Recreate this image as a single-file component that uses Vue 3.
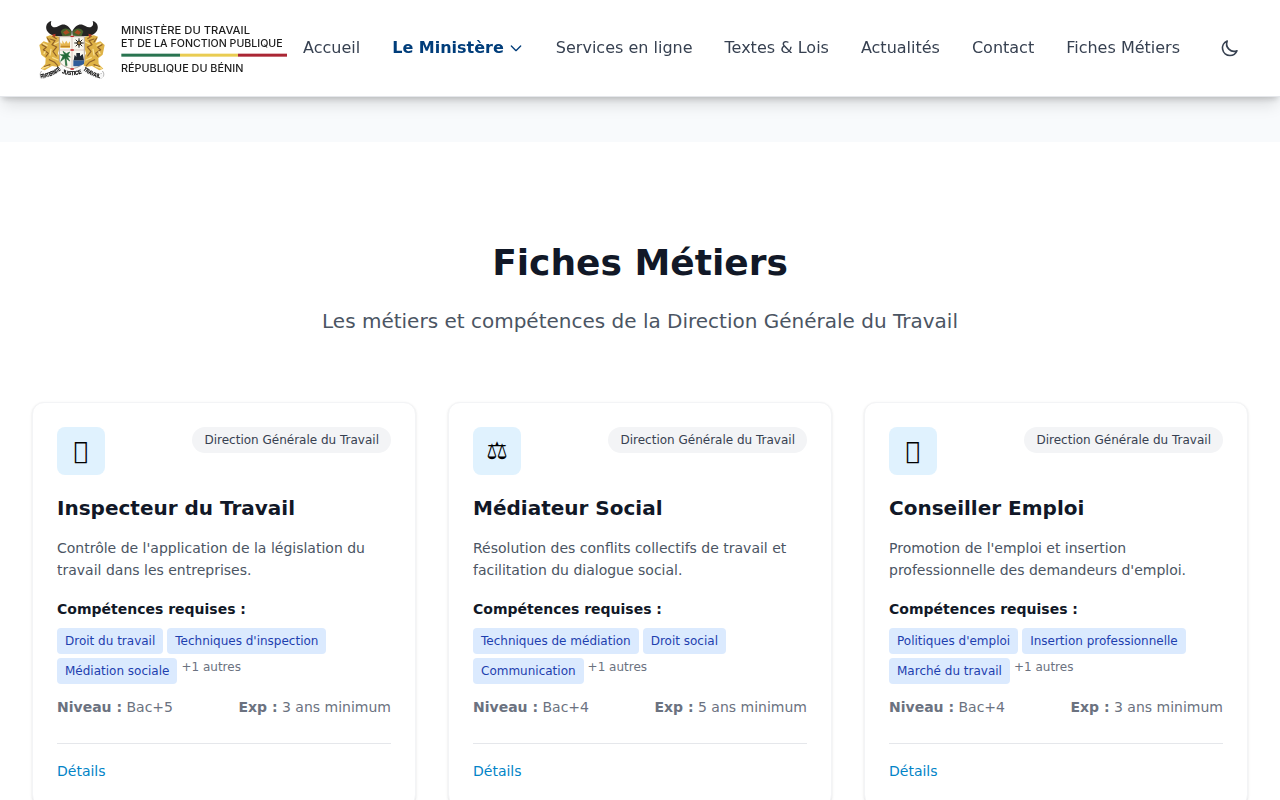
<script setup>
const links = [
  { label: 'Accueil' },
  { label: 'Le Ministère', active: true, menu: true },
  { label: 'Services en ligne' },
  { label: 'Textes & Lois' },
  { label: 'Actualités' },
  { label: 'Contact' },
  { label: 'Fiches Métiers' },
]

const jobs = [
  {
    icon: '\uE000',
    title: 'Inspecteur du Travail',
    text: "Contrôle de l'application de la législation du travail dans les entreprises.",
    skills: ['Droit du travail', "Techniques d'inspection", 'Médiation sociale'],
    level: 'Bac+5',
    exp: '3 ans minimum',
  },
  {
    icon: '⚖',
    title: 'Médiateur Social',
    text: 'Résolution des conflits collectifs de travail et facilitation du dialogue social.',
    skills: ['Techniques de médiation', 'Droit social', 'Communication'],
    level: 'Bac+4',
    exp: '5 ans minimum',
  },
  {
    icon: '\uE000',
    title: 'Conseiller Emploi',
    text: "Promotion de l'emploi et insertion professionnelle des demandeurs d'emploi.",
    skills: ["Politiques d'emploi", 'Insertion professionnelle', 'Marché du travail'],
    level: 'Bac+4',
    exp: '3 ans minimum',
  },
]
</script>

<template>
  <div class="page">
    <header class="header">
      <svg class="logo" viewBox="6 18 765 192">
        <defs>
          <g id="half">
            <path d="M64 33C50 36 45 51 51 62C59 76 78 80 96 78L124 74L125 64C116 44 100 38 86 48C73 57 58 50 64 33Z" fill="#242323" />
            <path d="M92 65C98 53 115 53 124 64L124 77L98 79Z" fill="#49622c" />
            <path d="M99 67L110 59L119 68L106 74Z" fill="#a94b20" />
            <path d="M60 76L76 77L90 82L91 105L84 130L93 151L90 172L66 168L44 181L32 176L46 162L47 145L34 134L28 105L41 94L56 99L48 80Z" fill="#dfb347" />
            <path d="M36 104L49 112L40 119L55 130L48 139M60 87L75 92L66 104L80 111L69 124L79 138M58 149L74 157L83 167M68 79L79 86M44 170L60 164M52 84L60 96" fill="none" stroke="#8f6128" stroke-width="3.5" />
            <path d="M40 101L51 107M63 118L60 135M74 102L86 96M68 143L84 150M38 175L55 169M45 125L42 131" fill="none" stroke="#f8df92" stroke-width="4" />
            <path d="M66 74L77 71L74 82Z" fill="#b93627" />
            <path d="M34 184C27 192 31 204 42 206C47 200 45 192 38 191" fill="none" stroke="#aaa" stroke-width="3" />
          </g>
        </defs>
        <use href="#half" />
        <use href="#half" transform="translate(252 0) scale(-1 1)" />
        <path d="M89 80H163V155Q158 169 126 177Q94 169 89 155Z" fill="#f9f7ef" stroke="#b7aaa0" stroke-width="3" />
        <path d="M91 114V97L97 103V91L103 101L109 92L114 101L120 94V114Z" fill="#e7b850" />
        <path d="M93 109H119" stroke="#ba7c22" stroke-width="3" />
        <path d="M147 86V112M134 99H160M138 90L156 108M156 90L138 108" stroke="#29251f" stroke-width="3" />
        <circle cx="147" cy="99" r="6" fill="#9c7941" stroke="#26231c" stroke-width="3" />
        <path d="M107 166L105 144L92 154L99 139L91 134L104 134L99 124L109 131L119 126L114 135L121 141L112 140L119 153L108 145L111 166Z" fill="#236b38" stroke="#236b38" stroke-width="2" />
        <path d="M130 151H162V162L146 169H130Z" fill="#315d99" />
        <path d="M131 151L134 134L139 141V129H150V139L158 132L162 151Z" fill="#202832" />
        <path d="M126 79V176M90 120H162" stroke="#c9b3ab" stroke-width="2" />
        <path d="M123 79H130M123 120H130M123 177H130" stroke="#c92525" stroke-width="4" />
        <path d="M35 199Q60 198 92 174M99 184Q126 196 153 184M162 175Q180 192 212 199" fill="none" stroke="#f6f6f6" stroke-width="15" />
        <path id="ribbon-left" d="M32 205Q63 202 96 178" fill="none" />
        <path id="ribbon-mid" d="M95 189Q126 202 158 189" fill="none" />
        <path id="ribbon-right" d="M159 179Q180 198 216 206" fill="none" />
        <text class="motto"><textPath href="#ribbon-left" textLength="67" lengthAdjust="spacingAndGlyphs">FRATERNITÉ</textPath></text>
        <text class="motto"><textPath href="#ribbon-mid" textLength="62" lengthAdjust="spacingAndGlyphs">JUSTICE</textPath></text>
        <text class="motto"><textPath href="#ribbon-right" textLength="58" lengthAdjust="spacingAndGlyphs">TRAVAIL</textPath></text>
        <text class="name" x="273" y="72" textLength="387" lengthAdjust="spacingAndGlyphs">MINISTÈRE DU TRAVAIL</text>
        <text class="name" x="273" y="109.5" textLength="485" lengthAdjust="spacingAndGlyphs">ET DE LA FONCTION PUBLIQUE</text>
        <rect x="274" y="131" width="176" height="9" fill="#297450" />
        <rect x="450" y="131" width="174" height="9" fill="#e9cc52" />
        <rect x="624" y="131" width="147" height="9" fill="#aa2634" />
        <text class="name" x="273" y="186" textLength="367" lengthAdjust="spacingAndGlyphs">RÉPUBLIQUE DU BÉNIN</text>
      </svg>
      <nav class="nav">
        <a v-for="l in links" :key="l.label" class="link" :class="{ active: l.active }">
          {{ l.label }}
          <svg v-if="l.menu" class="chevron" viewBox="0 0 24 24"><path d="M19 9l-7 7-7-7" /></svg>
        </a>
        <button class="theme" aria-label="Thème">
          <svg viewBox="0 0 24 24"><path d="M20.354 15.354A9 9 0 018.646 3.646 9.003 9.003 0 0012 21a9.003 9.003 0 008.354-5.646z" /></svg>
        </button>
      </nav>
    </header>

    <main class="section">
      <h2>Fiches Métiers</h2>
      <p class="subtitle">Les métiers et compétences de la Direction Générale du Travail</p>
      <div class="grid">
        <article v-for="j in jobs" :key="j.title" class="card">
          <div class="top">
            <div class="icon">{{ j.icon }}</div>
            <span class="pill">Direction Générale du Travail</span>
          </div>
          <h3>{{ j.title }}</h3>
          <p class="desc">{{ j.text }}</p>
          <h4>Compétences requises :</h4>
          <div class="tags">
            <span v-for="s in j.skills" :key="s" class="tag">{{ s }}</span>
            <span class="more">+1 autres</span>
          </div>
          <div class="meta">
            <span><strong>Niveau :</strong> {{ j.level }}</span>
            <span><strong>Exp :</strong> {{ j.exp }}</span>
          </div>
          <div class="foot"><a>Détails</a></div>
        </article>
      </div>
    </main>
  </div>
</template>

<style>
html, body { overflow: hidden; background: #f8fafc; }
</style>

<style scoped>
* { box-sizing: border-box; margin: 0; padding: 0; }
.page {
  height: 800px;
  overflow: hidden;
  padding-top: 142px;
  font-family: "DejaVu Sans", sans-serif;
  font-size: 16px;
  line-height: 1.6;
}
.header {
  position: fixed;
  top: 0;
  left: 0;
  right: 0;
  z-index: 10;
  height: 97px;
  padding: 0 32px;
  display: flex;
  align-items: center;
  justify-content: space-between;
  background: #fff;
  border-bottom: 1px solid #e5e7eb;
  box-shadow: 0 10px 15px -3px rgba(0, 0, 0, 0.13), 0 4px 6px -2px rgba(0, 0, 0, 0.17);
  will-change: transform;
}
.logo { width: 255px; height: 64px; flex: none; }
.name { font: 500 30px Inter, sans-serif; fill: #1c1c1c; }
.motto { font: bold 17px "Liberation Sans", sans-serif; fill: #000; stroke: #000; stroke-width: 0.5; }
.nav { display: flex; align-items: center; gap: 32px; }
.link {
  display: flex;
  align-items: center;
  gap: 4px;
  line-height: 24px;
  color: #374151;
  white-space: nowrap;
}
.link.active { color: #003d7a; font-weight: 700; }
svg path { stroke-linecap: round; stroke-linejoin: round; }
.chevron { width: 16px; height: 16px; fill: none; stroke: currentColor; stroke-width: 2; }
.theme { border: 0; background: none; padding: 8px; color: #374151; display: flex; }
.theme svg { width: 20px; height: 20px; fill: none; stroke: currentColor; stroke-width: 2; }

.section { background: #fff; padding: 96px 32px; text-align: center; }
h2 { font-size: 36px; line-height: 50px; font-weight: 700; color: #111827; margin-bottom: 16px; }
.subtitle { font-size: 20px; line-height: 34px; color: #4b5563; margin-bottom: 64px; }
.grid { display: grid; grid-template-columns: repeat(3, 1fr); gap: 32px; text-align: left; }
.card {
  border: 1px solid #f3f4f6;
  border-radius: 12px;
  padding: 24px;
  background: #fff;
  box-shadow: 0 1px 3px rgba(0, 0, 0, 0.1), 0 1px 2px -1px rgba(0, 0, 0, 0.1);
}
.top { display: flex; justify-content: space-between; align-items: flex-start; margin-bottom: 16px; }
.icon {
  width: 48px;
  height: 48px;
  border-radius: 8px;
  background: #e0f2fe;
  display: flex;
  align-items: center;
  justify-content: center;
  font-size: 24px;
  color: #000;
}
.pill { font-size: 12px; line-height: 18px; padding: 4px 12px; border-radius: 13px; background: #f3f4f6; color: #374151; }
h3 { font-size: 20px; line-height: 34px; font-weight: 700; color: #111827; margin-bottom: 12px; }
.desc { font-size: 14px; color: #4b5563; margin-bottom: 16px; }
h4 { font-size: 14px; font-weight: 700; color: #111827; margin-bottom: 8px; }
.tags { display: flex; flex-wrap: wrap; gap: 4px; margin-bottom: 12px; font-size: 12px; line-height: 18px; }
.tag { padding: 4px 8px; border-radius: 4px; background: #dbeafe; color: #1e40af; }
.more { color: #6b7280; }
.meta { display: flex; justify-content: space-between; font-size: 14px; color: #6b7280; margin-bottom: 24px; }
.foot { border-top: 1px solid #e5e7eb; padding-top: 16px; font-size: 14px; color: #0284c7; }
</style>
